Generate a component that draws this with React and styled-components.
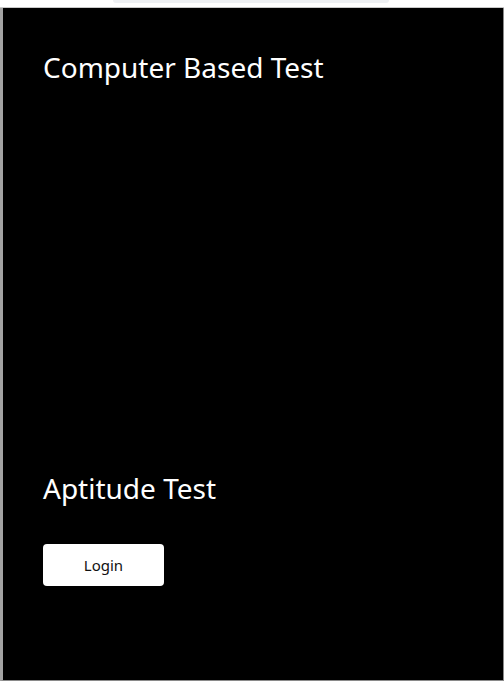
import styled, { createGlobalStyle } from 'styled-components';

const GlobalStyle = createGlobalStyle`
  html, body {
    margin: 0;
    padding: 0;
    background: #ffffff;
  }
  body {
    font-family: "Noto Sans", "Open Sans", sans-serif;
  }
`;

const Window = styled.div`
  width: 504px;
  height: 681px;
  display: flex;
  flex-direction: column;
  box-sizing: border-box;
  overflow: hidden;
`;

const TopStrip = styled.div`
  height: 7px;
  background: #ffffff;
  border-bottom: 1px solid #c8c8c8;
  display: flex;
  justify-content: center;
  flex-shrink: 0;
`;

const AddressPill = styled.div`
  width: 276px;
  height: 3px;
  margin-left: -2px;
  background: #eef0f3;
  border-radius: 0 0 8px 8px;
`;

const Viewport = styled.div`
  flex: 1;
  display: flex;
  background: #000000;
  border-left: 3px solid #a3a3a3;
  border-right: 1px solid #8a8a8a;
  border-bottom: 1px solid #8a8a8a;
`;

const Content = styled.main`
  flex: 1;
  display: flex;
  flex-direction: column;
  padding: 41px 40px 0 40px;
`;

const Heading = styled.h1`
  margin: 0;
  font-weight: 400;
  font-size: 28px;
  line-height: 36px;
  color: #ffffff;
`;

const Subheading = styled(Heading)`
  margin-top: 385px;
`;

const LoginButton = styled.button`
  margin-top: 38px;
  width: 121px;
  height: 42px;
  background: #ffffff;
  color: #111111;
  border: none;
  border-radius: 4px;
  font-family: "Noto Sans", "Open Sans", sans-serif;
  font-size: 15px;
  cursor: pointer;
`;

export default function App() {
  return (
    <>
      <GlobalStyle />
      <Window>
        <TopStrip>
          <AddressPill />
        </TopStrip>
        <Viewport>
          <Content>
            <Heading>Computer Based Test</Heading>
            <Subheading>Aptitude Test</Subheading>
            <LoginButton>Login</LoginButton>
          </Content>
        </Viewport>
      </Window>
    </>
  );
}
